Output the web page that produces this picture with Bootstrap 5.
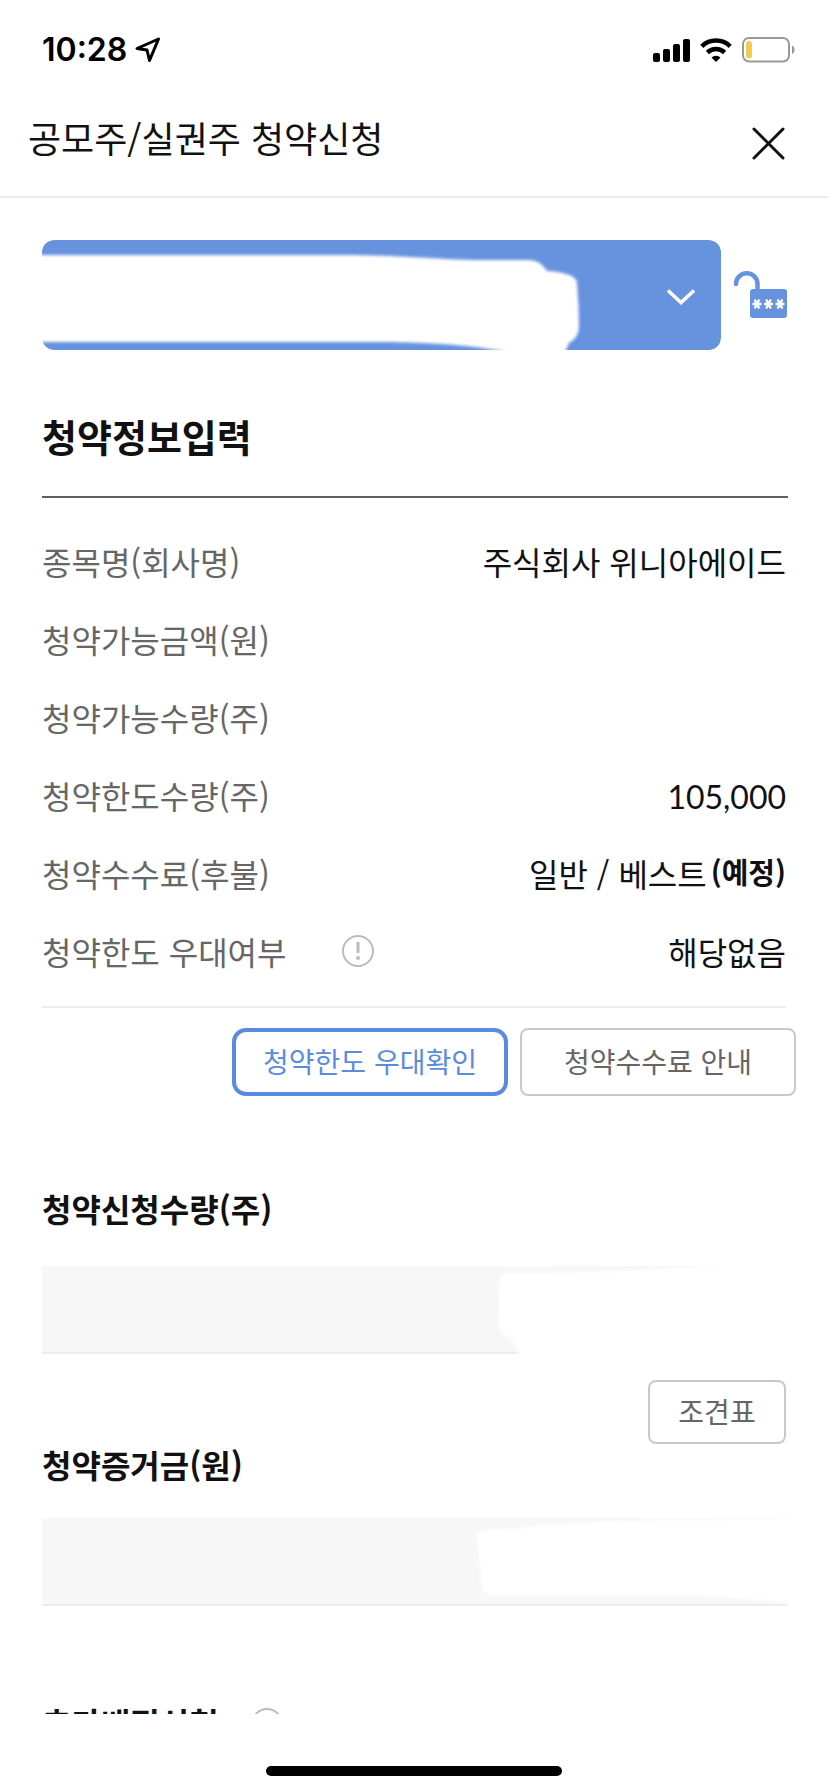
<!DOCTYPE html>
<html lang="ko">
<head>
<meta charset="utf-8">
<meta name="viewport" content="width=device-width, initial-scale=1">
<title>공모주/실권주 청약신청</title>
<link rel="stylesheet" href="https://cdn.jsdelivr.net/npm/bootstrap@5.3.0/dist/css/bootstrap.min.css">
<style>
  :root { --ink: #111; --muted-ink: #666; --brand: #6793de; --brand-ink: #5b8bdc; --rule: #ececec; }
  body { height: 100vh; background: #fff; color: var(--ink); font-family: Lato, "Noto Sans CJK KR", sans-serif; font-size: 32px; line-height: 48px; }
  svg { display: block; flex: none; }
  .kr { font-family: "Noto Sans CJK KR", sans-serif; }
  .status-bar { height: 98px; padding: 2px 32px 0 42px; color: #000; }
  .signals { gap: 10px; }
  .clock { font-family: Inter, sans-serif; font-weight: 600; }
  .title-bar { height: 100px; padding: 0 40px 0 28px; border-bottom: 2px solid var(--rule); }
  .title-bar h1 { font-size: 36px; line-height: 48px; font-weight: 400; margin: 0 0 20px; }
  .icon-btn { border: 0; padding: 0; background: none; }
  .scroller { flex: 1 1 0; min-height: 0; overflow-y: auto; scrollbar-width: none; padding: 42px 40px 0 42px; }
  .scroller::-webkit-scrollbar { display: none; }
  .account { height: 110px; border-radius: 12px; overflow: hidden; }
  .account select { appearance: none; height: 100%; border: 0; border-radius: 12px; background: var(--brand); color: #fff; font-size: 32px; }
  .chevron { position: absolute; right: 26px; top: 49px; pointer-events: none; }
  .cover { position: absolute; inset: 0; width: 100%; height: 100%; pointer-events: none; }
  .section-title { font-size: 38px; line-height: 56px; font-weight: 700; margin: 58px 0 0; padding-bottom: 32px; border-bottom: 2px solid #606060; }
  .info { margin: 0 2px 0 0; padding: 24px 0 16px; border-bottom: 2px solid var(--rule); }
  .info > div { height: 78px; line-height: 78px; }
  .info dt { font-weight: 400; color: var(--muted-ink); }
  .info dd { margin: 0; }
  .info strong { font-size: 29px; line-height: 74px; }
  .fee { gap: 4px; }
  .line-btn { font-size: 28px; line-height: 40px; height: 68px; padding: 0 0 2px; border: 2px solid #c8c9ce; border-radius: 8px; color: var(--muted-ink); background: #fff; }
  .line-btn.wide { width: 276px; }
  .line-btn.chosen { border: 4px solid var(--brand-ink); border-radius: 14px; color: var(--brand-ink); }
  .line-btn.low { width: 138px; height: 64px; }
  .actions { margin: 20px -8px 88px 0; gap: 12px; }
  .field-label { font-size: 32px; line-height: 48px; font-weight: 700; margin: 0; }
  .field { height: 88px; overflow: hidden; }
  .field input { height: 100%; border: 0; border-bottom: 2px solid var(--rule); border-radius: 0; background: #f7f7f7; font-size: 32px; text-align: right; }
  .qty-field { margin: 34px 0 26px; }
  .deposit-head { height: 108px; margin: 0 2px 30px 0; }
  .extra { margin-top: 92px; gap: 32px; }
  .home { height: 78px; padding-bottom: 16px; }
  .home span { width: 296px; height: 10px; border-radius: 5px; background: #000; }
</style>
</head>
<body class="d-flex flex-column overflow-hidden">
  <div class="status-bar d-flex align-items-center justify-content-between flex-shrink-0">
    <div class="d-flex align-items-center gap-2">
      <span class="clock">10:28</span>
      <svg width="26" height="26" viewBox="0 0 26 26" fill="none" stroke="#000" stroke-width="3" stroke-linejoin="round"><path d="M23.500 2 L2 11.500 L12 13 L14.500 23.500 Z"/></svg>
    </div>
    <div class="signals d-flex align-items-center">
      <svg width="37" height="24" viewBox="0 0 37 24"><rect x="0" y="15" width="7" height="9" rx="2"/><rect x="10" y="11" width="7" height="13" rx="2"/><rect x="20" y="6" width="7" height="18" rx="2"/><rect x="30" y="1" width="7" height="23" rx="2"/></svg>
      <svg width="32" height="24" viewBox="0 0 32 24" fill="none" stroke="#000" stroke-width="4.500"><path d="M1.800 8.300a20.500 20.500 0 0 1 28.400 0"/><path d="M7.400 14.500a12.500 12.500 0 0 1 17.200 0"/><path d="M16 24l-4.500-4.600a6.800 6.800 0 0 1 9 0z" fill="#000" stroke="none"/></svg>
      <svg width="54" height="26" viewBox="0 0 54 26"><rect x="1" y="1" width="46" height="23.500" rx="6" fill="none" stroke="#999" stroke-width="2"/><rect x="4" y="4" width="6" height="17.500" rx="3" fill="#f0cb50"/><path d="M50 8.500c3.500 1.500 3.500 7 0 8.500z" fill="#999"/></svg>
    </div>
  </div>

  <header class="title-bar d-flex align-items-center justify-content-between flex-shrink-0">
    <h1 class="kr">공모주/실권주 청약신청</h1>
    <button class="icon-btn mb-2" type="button" aria-label="닫기">
      <svg width="40" height="40" viewBox="0 0 40 40" stroke="#111" stroke-width="3" stroke-linecap="round"><path d="M6 6l29 29M35 6L6 35"/></svg>
    </button>
  </header>

  <main class="scroller">
    <div class="d-flex align-items-center">
      <div class="account position-relative flex-grow-1">
        <select class="w-100" aria-label="계좌 선택"><option></option></select>
        <svg class="cover"><defs><filter id="soft" x="-5%" y="-10%" width="110%" height="120%"><feGaussianBlur stdDeviation="1.700"/></filter></defs><path filter="url(#soft)" fill="#fff" d="M-12 15H310C370 16 390 19 430 20H487Q498 20 505 31Q536 33 535 44Q537 65 537 88Q536 98 527 103L522 114H475C430 104 380 102 330 102H-12Z"/></svg>
        <svg class="chevron" width="28" height="16" viewBox="0 0 28 16" fill="none" stroke="#fff" stroke-width="3.500"><path d="M1 1.500l13 12 13-12"/></svg>
      </div>
      <button class="icon-btn ms-2 ps-1" type="button" aria-label="계좌 비밀번호">
        <svg width="55" height="48" viewBox="0 0 55 48"><path d="M3 13a10.700 10.700 0 1 1 21.500 0v7" fill="none" stroke="#6793de" stroke-width="4.500" stroke-linecap="round"/><rect x="17" y="18" width="37" height="29" rx="3" fill="#6793de"/><g stroke="#fff" stroke-width="2.400"><path id="star" d="M19.500 33h9M21.700 28.500l4.600 9M26.300 28.500l-4.600 9"/><use href="#star" x="11.500"/><use href="#star" x="23"/></g></svg>
      </button>
    </div>

    <h2 class="section-title kr">청약정보입력</h2>

    <dl class="info">
      <div class="d-flex align-items-baseline justify-content-between"><dt class="kr">종목명(회사명)</dt><dd class="kr">주식회사 위니아에이드</dd></div>
      <div class="d-flex align-items-baseline justify-content-between"><dt class="kr">청약가능금액(원)</dt><dd></dd></div>
      <div class="d-flex align-items-baseline justify-content-between"><dt class="kr">청약가능수량(주)</dt><dd></dd></div>
      <div class="d-flex align-items-baseline justify-content-between"><dt class="kr">청약한도수량(주)</dt><dd>105,000</dd></div>
      <div class="d-flex align-items-baseline justify-content-between"><dt class="kr">청약수수료(후불)</dt><dd class="fee kr d-flex"><span>일반 / 베스트</span><strong>(예정)</strong></dd></div>
      <div class="d-flex align-items-center justify-content-between">
        <dt class="kr d-flex align-items-center gap-5"><span>청약한도 우대여부</span>
          <button class="icon-btn ms-2" type="button" aria-label="우대여부 도움말"><svg width="32" height="32" viewBox="0 0 32 32"><circle cx="16" cy="16" r="15" fill="none" stroke="#bbb" stroke-width="2"/><path d="M16 7v11" stroke="#bbb" stroke-width="3"/><circle cx="16" cy="23" r="2" fill="#bbb"/></svg></button>
        </dt><dd class="kr">해당없음</dd>
      </div>
    </dl>

    <div class="actions d-flex justify-content-end">
      <button class="line-btn wide chosen kr" type="button">청약한도 우대확인</button>
      <button class="line-btn wide kr" type="button">청약수수료 안내</button>
    </div>

    <label class="field-label kr d-block" for="qty">청약신청수량(주)</label>
    <div class="field qty-field position-relative">
      <input id="qty" class="w-100" type="text">
      <svg class="cover" preserveAspectRatio="none" viewBox="0 0 746 88"><path filter="url(#soft)" fill="#fff" d="M458 12Q459 7 470 7C540 7 600 5 680 -1L760 -6V96H480L470 72Q459 70 458 64Q456 35 458 12Z"/></svg>
    </div>

    <div class="deposit-head d-flex justify-content-between">
      <label class="field-label kr align-self-end" for="deposit">청약증거금(원)</label>
      <button class="line-btn low kr" type="button">조견표</button>
    </div>
    <div class="field position-relative">
      <input id="deposit" class="w-100" type="text">
      <svg class="cover" preserveAspectRatio="none" viewBox="0 0 746 88"><path filter="url(#soft)" fill="#fff" d="M435 17Q436 11 470 11C520 3 600 2 760 0V85L746 86C700 78 640 77 560 77H450Q440 77 439 64Z"/></svg>
    </div>

    <div class="extra d-flex align-items-center">
      <h3 class="field-label kr">추가배정신청</h3>
      <button class="icon-btn mt-1" type="button" aria-label="추가배정 도움말"><svg width="32" height="32" viewBox="0 0 32 32"><circle cx="16" cy="16" r="15" fill="none" stroke="#bbb" stroke-width="2"/><path d="M16 8v10" stroke="#bbb" stroke-width="3"/><circle cx="16" cy="23" r="2" fill="#bbb"/></svg></button>
    </div>
  </main>

  <footer class="home d-flex align-items-end justify-content-center flex-shrink-0"><span></span></footer>
  <script src="https://cdn.jsdelivr.net/npm/bootstrap@5.3.0/dist/js/bootstrap.bundle.min.js"></script>
</body>
</html>
